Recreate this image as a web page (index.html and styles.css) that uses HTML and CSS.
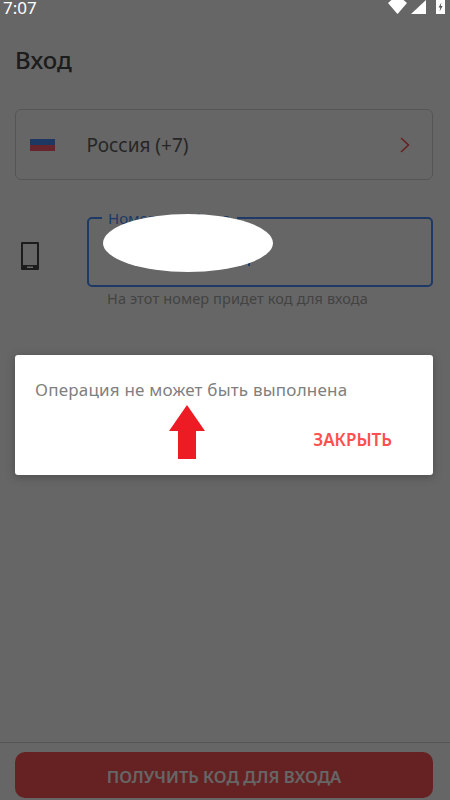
FILE: index.html
```html
<!DOCTYPE html>
<html lang="ru">
<head>
    <meta charset="UTF-8">
    <meta name="viewport" content="width=device-width, initial-scale=1.0">
    <title>Вход</title>
    <link rel="stylesheet" href="styles.css">
</head>
<body>
<div class="page">
    <div class="status-bar">
        <span class="clock">7:07</span>
        <div class="status-icons">
            <svg class="wifi" width="19" height="14" viewBox="0 0 19 14"><path d="M3.5 0H15.5L19 3L10 13.6Q9.5 14 9 13.6L0 3Z" fill="#fff"/></svg>
            <svg class="signal" width="15" height="14" viewBox="0 0 15 14"><path d="M15 0V14H0Z" fill="#fff"/></svg>
            <svg class="battery" width="9" height="14" viewBox="0 0 9 14"><path d="M0 0H9V14H0Z" fill="#fff"/><path d="M5.4 2.5L2.6 7.6H4.3L3.6 11.5L6.6 6H4.8Z" fill="#555"/></svg>
        </div>
    </div>

    <main class="content">
        <h1>Вход</h1>

        <div class="country">
            <div class="flag"><span class="flag-blue"></span><span class="flag-red"></span></div>
            <span class="country-name">Россия (+7)</span>
            <svg class="chevron" width="10" height="16" viewBox="0 0 10 16"><path d="M1 1L8.5 8L1 15" fill="none" stroke="#ff5050" stroke-width="1.6"/></svg>
        </div>

        <div class="phone-row">
            <div class="phone-icon">
                <svg width="18" height="28" viewBox="0 0 18 28"><path fill-rule="evenodd" d="M1 0H17Q18 0 18 1V27Q18 28 17 28H1Q0 28 0 27V1Q0 0 1 0ZM2 2V23H16V2ZM6 24.5V26H12V24.5Z" fill="#484848"/></svg>
            </div>
            <div class="phone-col">
                <div class="phone-field">
                    <label class="phone-label">Номер телефона</label>
                    <span class="cursor"></span>
                </div>
                <p class="hint">На этот номер придет код для входа</p>
            </div>
        </div>
    </main>

    <footer class="footer">
        <button class="submit">ПОЛУЧИТЬ КОД ДЛЯ ВХОДА</button>
    </footer>

    <div class="scrim">
        <div class="dialog">
            <p class="dialog-text">Операция не может быть выполнена</p>
            <div class="dialog-actions"><span class="dialog-close">ЗАКРЫТЬ</span></div>
        </div>
    </div>

    <!-- annotations drawn on top of the screenshot -->
    <div class="blot"></div>
    <svg class="arrow" width="36" height="54" viewBox="0 0 36 54"><path d="M18 0L36 26H27V54H9V26H0Z" fill="#ed1c24"/></svg>
</div>
</body>
</html>
```

FILE: styles.css
```css
* {
    box-sizing: border-box;
}

body {
    margin: 0;
    font-family: "Noto Sans", "Open Sans", sans-serif;
    background-color: #fff;
}

.page {
    position: relative;
    width: 450px;
    height: 800px;
    overflow: hidden;
    display: flex;
    flex-direction: column;
    background-color: #fff;
}

.status-bar {
    position: relative;
    z-index: 2;
    height: 16px;
    padding: 0 5px 0 3px;
    display: flex;
    justify-content: space-between;
    color: #fff;
}

.clock {
    font-size: 17px;
    line-height: 16px;
}

.status-icons {
    display: flex;
    align-items: flex-start;
}

.wifi {
    margin-right: 4px;
}

.signal {
    margin-right: 10px;
}

.content {
    flex: 1;
    padding: 0 17px 0 15px;
}

h1 {
    margin: 27px 0 32px;
    font-size: 24px;
    line-height: 34px;
    font-weight: 500;
    color: #464646;
}

.country {
    height: 71px;
    padding: 0 22.5px 0 13.5px;
    display: flex;
    align-items: center;
    border: 1.5px solid #d5d5d5;
    border-radius: 6px;
}

.flag {
    width: 25px;
    margin-right: 32px;
}

.flag span {
    display: block;
    height: 6px;
}

.flag-blue {
    background-color: #4a8cf5;
}

.flag-red {
    background-color: #ff5a6e;
}

.country-name {
    flex: 1;
    font-size: 19px;
    color: #606060;
}

.phone-row {
    margin-top: 37px;
    display: flex;
}

.phone-icon {
    width: 72px;
    padding: 25px 0 0 6px;
}

.phone-col {
    flex: 1;
}

.phone-field {
    position: relative;
    height: 70px;
    border: 2px solid #4a90ff;
    border-radius: 5px;
}

.phone-label {
    position: absolute;
    top: -10px;
    left: 13px;
    padding: 0 6px;
    background-color: #fff;
    font-size: 15px;
    line-height: 18px;
    color: #4a90ff;
}

.cursor {
    position: absolute;
    left: 159px;
    top: 41px;
    width: 2px;
    height: 6px;
    background-color: #4a90ff;
}

.hint {
    margin: 1px 0 0 20px;
    font-size: 14.5px;
    line-height: 20px;
    letter-spacing: 0.12px;
    color: #a8a8a8;
}

.footer {
    height: 58px;
    padding: 9px 17px 0 15px;
    border-top: 1px solid #d5d5d5;
}

.submit {
    display: block;
    width: 100%;
    height: 46px;
    padding: 2px 0 0;
    border: none;
    border-radius: 10px;
    background-color: #ff5555;
    font-family: inherit;
    font-size: 16.6px;
    font-weight: 600;
    color: #fff;
}

.scrim {
    position: absolute;
    inset: 0;
    z-index: 1;
    padding: 30px 17px 0 15px;
    display: flex;
    align-items: center;
    background-color: rgba(0, 0, 0, 0.6);
}

.dialog {
    width: 100%;
    height: 120px;
    padding: 23px 41px 0 20px;
    border-radius: 3px;
    background-color: #fff;
    box-shadow: 0 2px 10px rgba(0, 0, 0, 0.25);
}

.dialog-text {
    margin: 0;
    font-size: 17px;
    line-height: 24px;
    letter-spacing: 0.2px;
    color: #808080;
}

.dialog-actions {
    margin-top: 26px;
    display: flex;
    justify-content: flex-end;
}

.dialog-close {
    font-size: 17px;
    line-height: 24px;
    font-weight: 600;
    color: #ff5050;
}

.blot {
    position: absolute;
    z-index: 3;
    left: 103px;
    top: 214px;
    width: 170px;
    height: 58px;
    border-radius: 50%;
    background-color: #fff;
}

.arrow {
    position: absolute;
    z-index: 3;
    left: 169px;
    top: 405px;
}
```
